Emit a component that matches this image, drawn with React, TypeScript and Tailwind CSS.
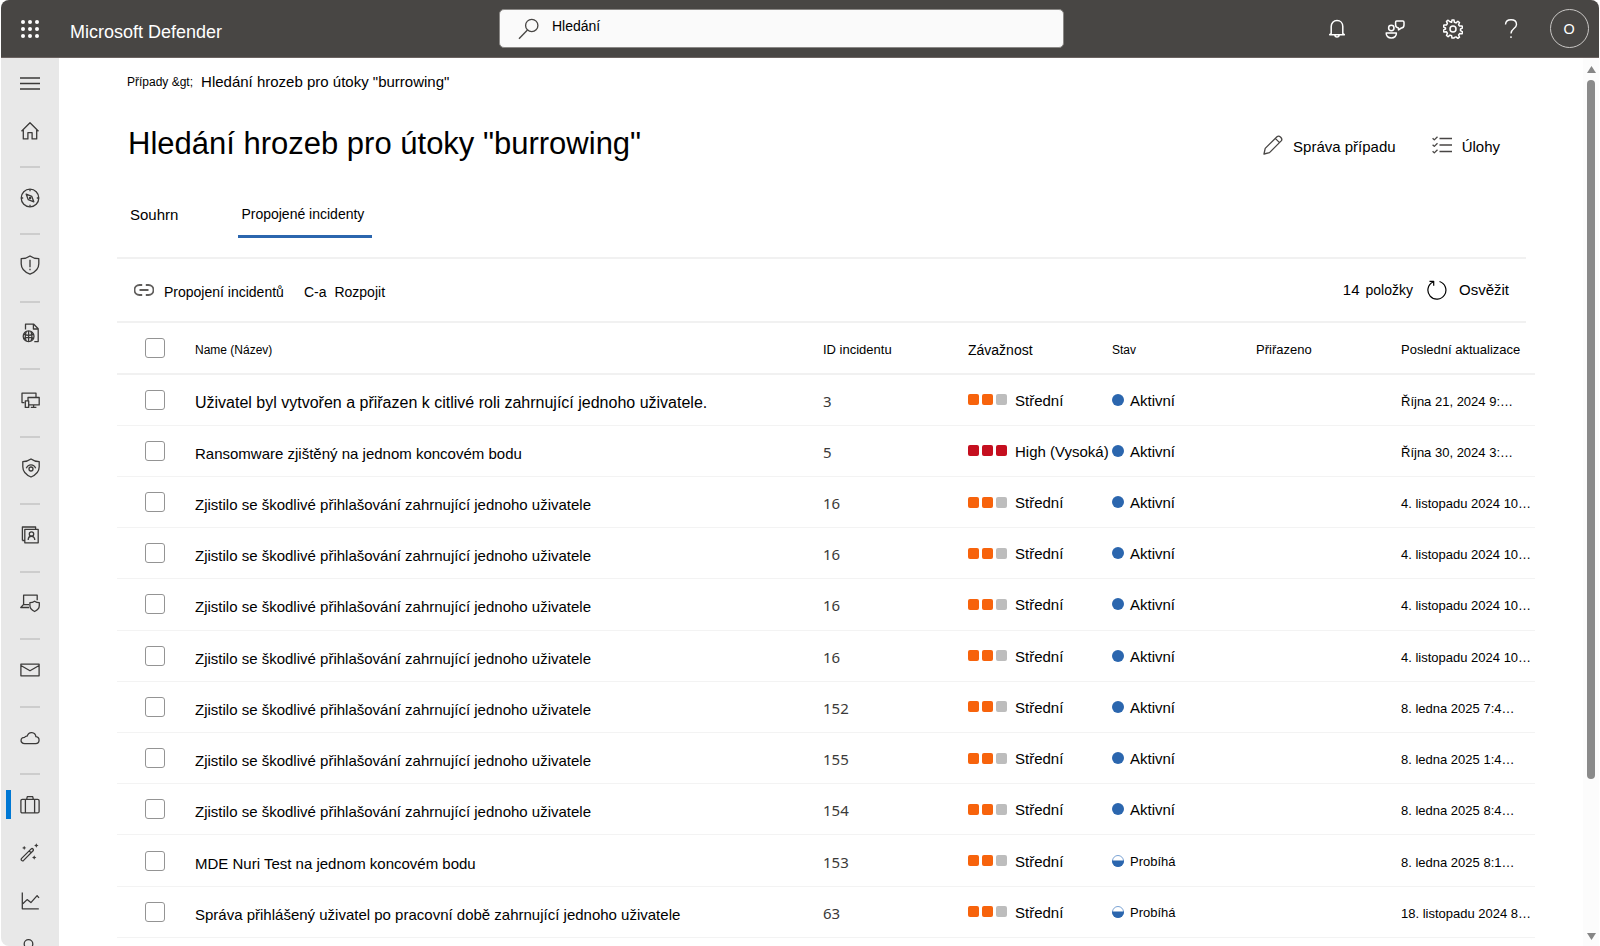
import React from "react";

type IconProps = { children: React.ReactNode; size?: number; width?: number };

function Icon({ children, size = 20, width = 1.3 }: IconProps) {
  return (
    <svg
      width={size}
      height={size}
      viewBox="0 0 20 20"
      fill="none"
      stroke="currentColor"
      strokeWidth={width}
      strokeLinejoin="round"
      aria-hidden="true"
      className="shrink-0"
    >
      {children}
    </svg>
  );
}

const HomeIcon = (
  <Icon>
    <path d="M1.500 10.200 10 1.800l8.500 8.400M3.300 8.600v9.300h4.600v-6.200h4.200v6.200h4.600V8.600" />
  </Icon>
);
const CompassIcon = (
  <Icon>
    <circle cx="10" cy="10" r="8.800" />
    <path d="M10 1.200v2M10 16.800v2M1.200 10h2M16.800 10h2" />
    <path d="M6.200 6.200l5.600 2.200 2 5.400-5.500-2.100z" />
    <circle cx="10.100" cy="10" r=".6" />
  </Icon>
);
const ShieldAlertIcon = (
  <Icon>
    <path d="M10 .9c2.600 1.900 5.400 2.700 8.800 2.700v5.200c0 5-3.300 8.300-8.800 10.400C4.500 17.100 1.200 13.800 1.200 8.800V3.600C4.600 3.600 7.400 2.800 10 .9z" />
    <path d="M10 4.800v7.400M10 13.800v1.500" />
  </Icon>
);
const FileGlobeIcon = (
  <Icon>
    <path d="M5.500 6.500V1.200h8.300l4.400 4.600v12.800h-3.900M13.400 1.200v4.800h4.800" />
    <circle cx="8.600" cy="13.300" r="5.400" />
    <path d="M8.600 8v10.600M3.800 11.200c3 1.400 6.600 1.400 9.600 0M3.800 15.500c3-1.400 6.600-1.400 9.600 0M6.300 8.500c-1.300 3-1.300 6.600 0 9.600M10.900 8.500c1.300 3 1.300 6.600 0 9.600" />
  </Icon>
);
const DevicesIcon = (
  <Icon>
    <path d="M4.500 12.600H2V3.200h14v3.500M8 7.500h11.200v7.400H8zM13.600 14.900v2.400M10.800 17.400h5.600" />
    <path d="M5.300 10.900h3.400v6.500H5.300z" fill="#e8e8e8" />
  </Icon>
);
const ShieldEyeIcon = (
  <Icon>
    <path d="M11 1c2.400 1.800 5 2.600 8.200 2.600v5.200c0 4.900-3 8-8.200 10.200C5.800 16.800 2.800 13.700 2.800 8.800V3.600C6 3.600 8.600 2.800 11 1z" />
    <path d="M6.300 10.300c1.800-4.600 7.600-4.600 9.400 0" />
    <circle cx="11" cy="11" r="2" />
  </Icon>
);
const ContactIcon = (
  <Icon>
    <path d="M4.800 4.300h13.400v13.500H4.800zM2.400 15.500V2h13.200v2.200M2.400 15.500h2.400" />
    <circle cx="11.500" cy="9" r="2.200" />
    <path d="M8.200 15c0-5 6.600-5 6.600 0" />
  </Icon>
);
const LaptopShieldIcon = (
  <Icon>
    <path d="M3.600 11.500V2.200h13.600v5M9 11.600H3.400L.8 14.500H9" />
    <path d="M14.600 8.200c1.400 1 2.900 1.500 4.700 1.500v2.800c0 2.900-1.700 4.700-4.700 6-3-1.300-4.700-3.100-4.700-6V9.700c1.800 0 3.300-.5 4.700-1.500z" />
  </Icon>
);
const MailIcon = (
  <Icon>
    <path d="M.9 4.200h18.200v11.600H.9zM.9 5.500 10 10.800l9.100-5.300" />
  </Icon>
);
const CloudIcon = (
  <Icon>
    <path d="M4.700 15.600C-.5 15.300.2 9.200 4.700 9.300c.7-1.500 1.700-1.300 2.500-1.200 1.600-5 8-4.300 8.700.5 4.300.5 4.200 6.700-.3 7z" />
  </Icon>
);
const BriefcaseIcon = (
  <Icon>
    <path d="M2.400 4.300h15.200c1 0 1.500.5 1.500 1.500v10.600c0 1-.5 1.500-1.500 1.500H2.400c-1 0-1.500-.5-1.500-1.500V5.800c0-1 .5-1.500 1.500-1.500zM5.400 4.300v13.600M14.600 4.300v13.600M6.700 4.200l.6-2.500h5.400l.6 2.500" />
  </Icon>
);
const WandIcon = (
  <Icon>
    <path d="M1.600 15.400 11.200 5.900c1.200-1 2.900.7 1.900 1.900L3.600 17.400c-1.400 1.200-3.200-.6-2-2zM9.200 7.900l1.900 1.900" />
    <g fill="currentColor" stroke="none">
      <path d="M16.300.3l.7 1.500 1.500.7-1.500.7-.7 1.500-.7-1.500-1.500-.7 1.500-.7zM4.200 2.700l.7 1.500 1.500.7-1.500.7-.7 1.500-.7-1.500L2 4.900l1.500-.7zM14.200 12.300l.7 1.500 1.500.7-1.500.7-.7 1.500-.7-1.500-1.500-.7 1.500-.7z" />
    </g>
  </Icon>
);
const ChartIcon = (
  <Icon>
    <path d="M2.300 1.500v16.300h16.500M2.800 12.800l4.300-4.200 3.800 3 6.200-7 1.900 2.200" />
  </Icon>
);
const PersonIcon = (
  <Icon>
    <circle cx="8.500" cy="5" r="4.300" />
    <path d="M1.500 18c1-9 14-9 15 0" />
  </Icon>
);

const groups = [
  { label: "Průzkum", icon: CompassIcon },
  { label: "Incidenty", icon: ShieldAlertIcon },
  { label: "Analýza hrozeb", icon: FileGlobeIcon },
  { label: "Zařízení", icon: DevicesIcon },
  { label: "Zabezpečení", icon: ShieldEyeIcon },
  { label: "Identity", icon: ContactIcon },
  { label: "Koncové body", icon: LaptopShieldIcon },
  { label: "E-mail", icon: MailIcon },
  { label: "Cloudové aplikace", icon: CloudIcon },
];

const signIn = "Zjistilo se škodlivé přihlašování zahrnující jednoho uživatele";

type Incident = {
  name: string;
  id: number;
  high?: boolean;
  inProgress?: boolean;
  featured?: boolean;
  updated: string;
};

const incidents: Incident[] = [
  {
    name: "Uživatel byl vytvořen a přiřazen k citlivé roli zahrnující jednoho uživatele.",
    id: 3,
    featured: true,
    updated: "Října 21, 2024 9:…",
  },
  { name: "Ransomware zjištěný na jednom koncovém bodu", id: 5, high: true, updated: "Října 30, 2024 3:…" },
  { name: signIn, id: 16, updated: "4. listopadu 2024 10…" },
  { name: signIn, id: 16, updated: "4. listopadu 2024 10…" },
  { name: signIn, id: 16, updated: "4. listopadu 2024 10…" },
  { name: signIn, id: 16, updated: "4. listopadu 2024 10…" },
  { name: signIn, id: 152, updated: "8. ledna 2025 7:4…" },
  { name: signIn, id: 155, updated: "8. ledna 2025 1:4…" },
  { name: signIn, id: 154, updated: "8. ledna 2025 8:4…" },
  { name: "MDE Nuri Test na jednom koncovém bodu", id: 153, inProgress: true, updated: "8. ledna 2025 8:1…" },
  {
    name: "Správa přihlášený uživatel po pracovní době zahrnující jednoho uživatele",
    id: 63,
    inProgress: true,
    updated: "18. listopadu 2024 8…",
  },
];

function Severity({ high }: { high?: boolean }) {
  const on = high ? "bg-[#c50f1f]" : "bg-[#f7630c]";
  const off = high ? "bg-[#c50f1f]" : "bg-[#bdbdbd]";
  return (
    <div className="flex items-center gap-2">
      <span className="flex gap-[3px]">
        <span className={`size-[11px] rounded-[2px] ${on}`} />
        <span className={`size-[11px] rounded-[2px] ${on}`} />
        <span className={`size-[11px] rounded-[2px] ${off}`} />
      </span>
      <span className="whitespace-nowrap pt-[2px] text-[15px]">{high ? "High (Vysoká)" : "Střední"}</span>
    </div>
  );
}

function Status({ inProgress }: { inProgress?: boolean }) {
  return (
    <div className="flex items-center gap-[6px]">
      {inProgress ? (
        <svg width="12" height="12" viewBox="0 0 12 12" aria-hidden="true">
          <circle cx="6" cy="6" r="5.500" fill="#fff" stroke="#7ba3d4" />
          <path d="M0 5.500h12v.5a6 6 0 0 1-12 0z" fill="#2b66ae" />
        </svg>
      ) : (
        <span className="size-3 rounded-full bg-[#2b66ae]" />
      )}
      <span className={`pt-[2px] ${inProgress ? "text-[13px]" : "text-[15px]"}`}>
        {inProgress ? "Probíhá" : "Aktivní"}
      </span>
    </div>
  );
}

function Tick({ label }: { label: string }) {
  return (
    <input
      type="checkbox"
      aria-label={label}
      className="ml-7 block size-5 appearance-none rounded-[3px] border border-[#949494] bg-white checked:bg-[#2b66ae]"
    />
  );
}

function TopBar() {
  return (
    <header className="flex h-[58px] shrink-0 items-center rounded-t-lg border-b border-[#6b6361] bg-[#484644] text-white">
      <button aria-label="Spouštěč aplikací" className="flex w-[57px] justify-center">
        <svg width="20" height="20" viewBox="0 0 20 20" fill="currentColor" aria-hidden="true">
          {[3, 10, 17].map((y) => [3, 10, 17].map((x) => <circle key={`${x}-${y}`} cx={x} cy={y} r="2" />))}
        </svg>
      </button>
      <div className="w-[441px] pl-3 pt-[6px] text-lg leading-6">Microsoft Defender</div>
      <label className="flex h-[39px] w-[565px] items-center rounded-[5px] border border-[#8a8886] bg-[#fafafa] pl-[18px] text-[#484644]">
        <Icon size={22} width={1.2}>
          <circle cx="12.500" cy="6.800" r="5.600" />
          <path d="M8.600 10.900.9 18.900" />
        </Icon>
        <input
          type="text"
          aria-label="Hledání"
          placeholder="Hledání"
          className="mb-[5px] ml-3 min-w-0 flex-1 bg-transparent text-[14px] text-black outline-none placeholder:text-black"
        />
      </label>
      <div className="ml-auto mr-px flex items-center">
        <button aria-label="Oznámení" className="flex w-[58px] justify-center">
          <Icon width={1.5}>
            <path d="M4.200 14.500V7.600C4.200 4 6.600 1.500 10 1.500s5.800 2.500 5.800 6.100v6.900l1.500 1.200H2.700zM7.800 16c.3 2.600 4.100 2.600 4.400 0" />
          </Icon>
        </button>
        <button aria-label="Komunita" className="flex w-[58px] justify-center">
          <Icon width={1.5}>
            <circle cx="6.300" cy="9" r="2.700" />
            <path d="M1.200 13.900h10.200c.2 3.200-2 5-5.100 5s-5.300-1.800-5.100-5zM11.600 2h6.200c.8 0 1.200.4 1.200 1.200v2.900c0 2.200-1 2.900-2.600 2.900l-2.900 1.900V9c-1.900-.2-2.900-1.200-2.900-2.900V3.200c0-.8.300-1.200 1-1.200z" />
          </Icon>
        </button>
        <button aria-label="Nastavení" className="flex w-[58px] justify-center">
          <Icon width={1.5}>
            <path d="M8.600 3.300 9 .9h2l.4 2.400 1.600.6 1.900-1.600 1.600 1.200-.9 2.200 1 1.400 2.500-.1.600 1.900-2.200 1.100v1.700l2.200 1.200-.6 1.900-2.500-.2-1 1.400.9 2.200-1.600 1.200-1.900-1.500-1.600.5L11 19.100H9l-.4-2.400-1.600-.6-1.900 1.600-1.600-1.200.9-2.300-1-1.400-2.500.2-.6-1.900L2.500 10V9L.3 7.800l.6-1.900 2.500.1 1-1.400-.9-2.200 1.600-1.200L7 2.800z" />
            <circle cx="10" cy="10" r="3" />
          </Icon>
        </button>
        <button aria-label="Nápověda" className="flex w-[58px] justify-center">
          <Icon width={1.4}>
            <path d="M4.500 5.500C4.700 2.500 6.700.8 10 .8s5.500 1.700 5.500 4.600c0 4-5.500 4.300-5.500 9M10 17.200V19" />
          </Icon>
        </button>
        <button aria-label="Účet" className="flex w-[58px] justify-center">
          <span className="flex size-[39px] items-center justify-center rounded-full border border-[#c8c6c4] font-['Noto_Sans',sans-serif] text-[15px]">
            O
          </span>
        </button>
      </div>
    </header>
  );
}

function SideBar() {
  return (
    <nav className="flex w-[58px] shrink-0 flex-col items-center overflow-hidden rounded-bl-lg bg-[#e8e8e8] text-[#3b3a39]">
      <button aria-label="Nabídka" className="mt-[15px] flex h-5 items-center">
        <svg width="20" height="13" viewBox="0 0 20 13" stroke="currentColor" strokeWidth="1.400" aria-hidden="true">
          <path d="M0 1h20M0 6.500h20M0 12h20" />
        </svg>
      </button>
      <a href="#home" aria-label="Domů" className="mt-7 flex h-5">
        {HomeIcon}
      </a>
      <ul className="mt-[25px] flex min-h-0 flex-1 flex-col">
        {groups.map((g) => (
          <li key={g.label} className="min-h-0 flex-1 border-t-2 border-[#cdcdcd] pt-5">
            <a href="#menu" aria-label={g.label} className="block">
              {g.icon}
            </a>
          </li>
        ))}
      </ul>
      <div className="flex h-[173px] w-full shrink-0 flex-col items-center overflow-hidden">
        <span className="h-[2px] w-5 shrink-0 bg-[#cdcdcd]" />
        <a href="#cases" aria-label="Případy" className="mt-[15px] flex h-[29px] w-full shrink-0 items-center pl-[5px]">
          <span className="h-full w-[5px] bg-[#0078d4]" />
          <span className="ml-[9px]">{BriefcaseIcon}</span>
        </a>
        <a href="#wand" aria-label="Optimalizace" className="mt-6 shrink-0">
          {WandIcon}
        </a>
        <a href="#reports" aria-label="Sestavy" className="mt-7 shrink-0">
          {ChartIcon}
        </a>
        <a href="#people" aria-label="Uživatelé" className="mt-7 shrink-0">
          {PersonIcon}
        </a>
      </div>
    </nav>
  );
}

const heads = ["Name (Název)", "ID incidentu", "Závažnost", "Stav", "Přiřazeno", "Poslední aktualizace"];
const headClasses = ["text-[12px]", "text-[13px]", "text-[14px]", "text-[12px]", "text-[13px]", "text-[13px]"];

export default function App() {
  return (
    <div className="flex h-screen flex-col bg-white px-px font-['Liberation_Sans',Arial,sans-serif] text-black">
      <TopBar />
      <div className="flex min-h-0 flex-1">
        <SideBar />
        <main className="flex min-w-0 flex-1 flex-col pb-2 pl-[58px] pr-[48px]">
          <nav aria-label="Cesta" className="mt-3 flex items-center gap-2 pl-[10px] leading-6">
            <a href="#cases" className="text-[12px]">
              Případy &amp;gt;
            </a>
            <span className="text-[15px]">Hledání hrozeb pro útoky "burrowing"</span>
          </nav>
          <div className="mt-[30px] flex items-center justify-between pl-[11px] pr-[35px]">
            <h1 className="text-[31px] leading-10">Hledání hrozeb pro útoky "burrowing"</h1>
            <div className="flex items-center gap-9 pt-[2px] text-[15px]">
              <button className="flex items-center gap-[10px]">
                <span className="text-[#484644]">
                  <Icon>
                    <path d="M1 19l1.200-5.600L14 1.700c2.200-2 6.200 2 4.200 4.200L6.500 17.600zM12.300 3.400l4.200 4.200" />
                  </Icon>
                </span>
                <span className="pt-1">Správa případu</span>
              </button>
              <button className="flex items-center gap-[10px]">
                <span className="text-[#484644]">
                  <Icon>
                    <path d="M7.500 3.500H20M7.500 10H20M7.500 16.500H20M.6 3.200l1.700 1.700L5.500 1.700M.6 9.700l1.700 1.700 3.200-3.200M.6 16.200l1.700 1.700 3.200-3.200" />
                  </Icon>
                </span>
                <span className="pt-1">Úlohy</span>
              </button>
            </div>
          </div>
          <div role="tablist" className="mt-[39px] flex gap-[60px] pl-[13px]">
            <button role="tab" aria-selected="false" className="h-[35px] pb-[11px] text-[15px]">
              Souhrn
            </button>
            <button
              role="tab"
              aria-selected="true"
              className="h-[35px] border-b-[3px] border-[#2b66ae] pb-[9px] pl-[3px] pr-2 text-[14px]"
            >
              Propojené incidenty
            </button>
          </div>
          <div className="mr-[9px] mt-[19px] flex h-[66px] shrink-0 items-center border-y-2 border-[#f1f1f1] px-[17px]">
            <button className="flex items-center gap-[10px] text-[14px]">
              <span className="text-[#605e5c]">
                <Icon width={1.8}>
                  <path d="M8.200 5H5.500a5 5 0 0 0 0 10h2.700M11.800 5h2.700a5 5 0 0 1 0 10h-2.700M5.500 10h9" />
                </Icon>
              </span>
              <span className="pt-1">Propojení incidentů</span>
            </button>
            <button className="ml-5 flex gap-2 pt-1 text-[14px]">
              <span>C-a</span>
              <span>Rozpojit</span>
            </button>
            <span className="ml-auto flex items-baseline gap-[6px] text-[14px]">
              <span className="text-[15px]">14</span>
              <span>položky</span>
            </span>
            <button className="ml-[14px] flex items-center gap-3 text-[15px]">
              <Icon width={1.2}>
                <path d="M12.500 1.500A9 9 0 1 1 6 2M2.500 1.300h4.200v4.400" />
              </Icon>
              Osvěžit
            </button>
          </div>
          <div className="min-h-0 flex-1">
            <table className="h-full w-full table-fixed border-collapse text-left leading-5">
              <colgroup>
                <col className="w-[78px]" />
                <col />
                <col className="w-[145px]" />
                <col className="w-[144px]" />
                <col className="w-[144px]" />
                <col className="w-[145px]" />
                <col className="w-[134px]" />
              </colgroup>
              <thead>
                <tr className="h-[51px] border-b-2 border-[#f1f1f1]">
                  <th>
                    <Tick label="Vybrat vše" />
                  </th>
                  {heads.map((h, i) => (
                    <th key={h} className={`whitespace-nowrap pt-1 font-normal ${headClasses[i]}`}>
                      {h}
                    </th>
                  ))}
                </tr>
              </thead>
              <tbody>
                {incidents.map((row, i) => (
                  <tr key={i} className="h-[51px] border-b border-[#f3f3f3]">
                    <td>
                      <Tick label={`Vybrat ${row.name}`} />
                    </td>
                    <td className={`truncate pt-[6px] ${row.featured ? "text-[16px]" : "text-[15px]"}`}>{row.name}</td>
                    <td className="pt-[2px] font-['Noto_Sans',sans-serif] text-[15px] text-[#3b3a39]">{row.id}</td>
                    <td>
                      <Severity high={row.high} />
                    </td>
                    <td>
                      <Status inProgress={row.inProgress} />
                    </td>
                    <td />
                    <td className="whitespace-nowrap pt-1 text-[13px]">{row.updated}</td>
                  </tr>
                ))}
              </tbody>
            </table>
          </div>
        </main>
        <div className="flex w-4 shrink-0 flex-col items-center bg-[#fcfcfc] pb-[6px] pt-2" aria-hidden="true">
          <svg width="9" height="7" viewBox="0 0 9 7" fill="#868686">
            <path d="M4.500 0 9 7H0z" />
          </svg>
          <div className="mt-[7px] min-h-0 w-full flex-1">
            <div className="mx-auto h-[82%] w-2 rounded-full bg-[#8a8a8a]" />
          </div>
          <svg width="9" height="7" viewBox="0 0 9 7" fill="#868686">
            <path d="M4.500 7 9 0H0z" />
          </svg>
        </div>
      </div>
    </div>
  );
}
